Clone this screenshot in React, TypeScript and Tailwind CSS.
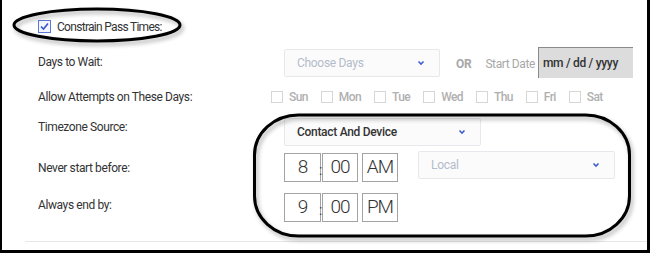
import React from "react";

const days = ["Sun", "Mon", "Tue", "Wed", "Thu", "Fri", "Sat"];

const Chevron: React.FC = () => (
  <svg width="8" height="6" viewBox="0 0 8 6" className="shrink-0">
    <path d="M1.5 1.5 L4 4 L6.5 1.5" fill="none" stroke="#3f5fd0" strokeWidth="1.6" />
  </svg>
);

const Select: React.FC<{ label: string; muted?: boolean; className: string }> = ({
  label,
  muted,
  className,
}) => (
  <div
    className={`flex items-center justify-between pl-[12px] pr-[14px] bg-[#fbfbfb] border border-[#e6e8ec] rounded-[2px] text-[12px] tracking-[-0.3px] ${
      muted ? "text-[#b4bccb]" : "text-[#333] font-medium"
    } ${className}`}
  >
    <span>{label}</span>
    <Chevron />
  </div>
);

const TimeBox: React.FC<{ value: string; w: string }> = ({ value, w }) => (
  <div
    className={`${w} h-[29px] border border-[#a3a3a3] flex items-center justify-center text-[19px] font-light text-[#333] tracking-[-1px]`}
  >
    {value}
  </div>
);

const TimeRow: React.FC<{ hour: string; ampm: string }> = ({ hour, ampm }) => (
  <div className="flex items-start">
    <TimeBox value={hour} w="w-[37px]" />
    <div className="w-[1px] h-[29px] relative">
      <span className="absolute left-[-2px] top-[10px] text-[14px] leading-none text-[#444]">:</span>
    </div>
    <TimeBox value="00" w="w-[36px]" />
    <div className="w-[4px]" />
    <TimeBox value={ampm} w="w-[36px]" />
  </div>
);

const Label: React.FC<{ text: string; pt: string }> = ({ text, pt }) => (
  <div className={`w-[233px] shrink-0 ${pt} text-[12px] leading-[16px] tracking-[-0.4px] text-[#333]`}>{text}</div>
);

export default function App() {
  return (
    <div
      className="relative w-[650px] h-[253px] bg-white border-l-2 border-r-[3px] border-b-[3px] border-black overflow-hidden"
      style={{ fontFamily: "Roboto, 'Liberation Sans', sans-serif" }}
    >
      <div className="pl-[36px] pt-[20px]">
        {/* header */}
        <div className="flex items-center h-[13px]">
          <svg width="13" height="13" viewBox="0 0 13 13">
            <rect x="0.5" y="0.5" width="12" height="12" fill="#f4f6ff" stroke="#5b78d8" />
            <path d="M3 6.5 L5.5 9 L10 3.5" fill="none" stroke="#3454cc" strokeWidth="1.6" />
          </svg>
          <span className="ml-[6px] text-[12px] tracking-[-0.7px] text-[#333]">Constrain Pass Times:</span>
        </div>

        {/* days to wait */}
        <div className="flex items-start mt-[14px] h-[31px]">
          <Label text="Days to Wait:" pt="pt-[7px]" />
          <div className="flex items-start pl-[13px]">
            <Select label="Choose Days" muted className="w-[156px] h-[28px] mt-[2px]" />
            <span className="ml-[16px] mt-[8px] text-[12px] font-bold text-[#a8a8a8] tracking-[-0.3px]">OR</span>
            <span className="ml-[14px] mt-[8px] text-[12px] text-[#a8a8a8] tracking-[-0.4px]">Start Date</span>
            <div className="ml-[3px] w-[95px] h-[31px] bg-[#dcdcdc] border-l border-t border-[#8a8a8a] flex items-center pl-[4px] text-[12px] font-medium text-[#333] tracking-[-0.3px]">
              mm / dd / yyyy
            </div>
          </div>
        </div>

        {/* allow attempts */}
        <div className="flex items-center mt-[13px] h-[12px]">
          <Label text="Allow Attempts on These Days:" pt="pt-0" />
          <div className="flex items-center">
            {days.map((d) => (
              <div key={d} className="flex items-center mr-[13px]">
                <div className="w-[12px] h-[12px] border border-[#d6d6d6] bg-white" />
                <span className="ml-[6px] text-[12px] font-medium text-[#b0b0b0] tracking-[-0.6px]">{d}</span>
              </div>
            ))}
          </div>
        </div>

        {/* timezone source */}
        <div className="flex items-start mt-[15px] h-[28px]">
          <Label text="Timezone Source:" pt="pt-[1px]" />
          <div className="pl-[13px]">
            <Select label="Contact And Device" className="w-[197px] h-[28px]" />
          </div>
        </div>

        {/* never start before */}
        <div className="flex items-start mt-[5px] h-[31px]">
          <Label text="Never start before:" pt="pt-[9px]" />
          <div className="flex items-start pl-[13px]">
            <div className="mt-[2px]">
              <TimeRow hour="8" ampm="AM" />
            </div>
            <Select label="Local" muted className="ml-[20px] w-[197px] h-[28px]" />
          </div>
        </div>

        {/* always end by */}
        <div className="flex items-start mt-[11px] h-[29px]">
          <Label text="Always end by:" pt="pt-[4px]" />
          <div className="pl-[13px]">
            <TimeRow hour="9" ampm="PM" />
          </div>
        </div>
      </div>

      <div className="ml-[23px] mt-[19px] border-t border-[#e6e6e6]" />

      {/* annotation marks */}
      <svg className="absolute inset-0 pointer-events-none" width="645" height="250">
        <defs>
          <filter id="blur" x="-10%" y="-20%" width="120%" height="140%">
            <feGaussianBlur stdDeviation="2" />
          </filter>
        </defs>
        <g transform="translate(2 3)" filter="url(#blur)" opacity="0.45">
          <ellipse cx="95" cy="25" rx="83" ry="16" fill="none" stroke="#555" strokeWidth="3" />
          <rect x="252.5" y="115" width="375" height="121" rx="44" ry="40" fill="none" stroke="#555" strokeWidth="3" />
        </g>
        <ellipse cx="95" cy="25" rx="83" ry="16" fill="none" stroke="#000" strokeWidth="3" />
        <rect x="252.5" y="115" width="375" height="121" rx="44" ry="40" fill="none" stroke="#000" strokeWidth="3" />
      </svg>
    </div>
  );
}
